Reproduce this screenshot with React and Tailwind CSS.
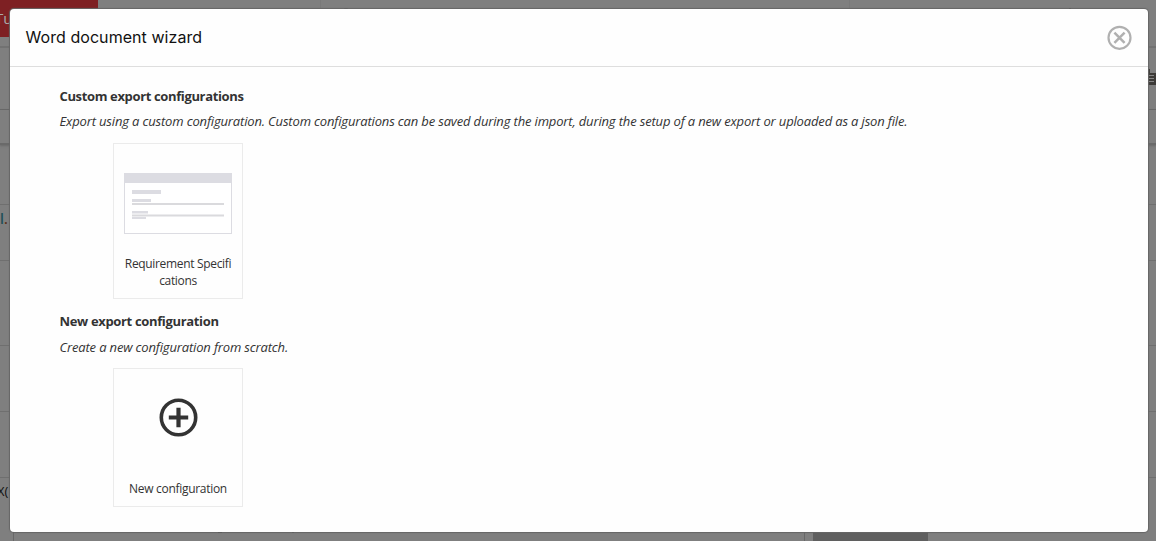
import React from 'react';

/**
 * Backdrop — the dimmed editor page that stays visible around the dialog.
 */
function Backdrop() {
  return (
    <div className="flex h-[541px] w-full flex-col overflow-hidden bg-[#7f7f7f] font-['Open_Sans',sans-serif]">
      {/* Tab strip */}
      <div className="flex h-12 flex-none items-start border-b-2 border-[#727272]">
        <div className="flex h-[37px] w-[98px] items-center bg-[#7e2023] text-[15px] text-[#aaa]">
          <span className="-ml-[5px]">Tu</span>
        </div>
        <div className="ml-[222px] h-full w-[530px] border-x border-[#797979] pt-2 pl-[22px]">
          <div className="h-1 w-1.5 rounded-t bg-[#333]" />
        </div>
        <div className="mt-2 ml-[219px] h-1 w-0.5 bg-[#222]" />
      </div>

      {/* Toolbar */}
      <div className="flex h-[62px] flex-none items-start justify-end border-b border-[#686868] pt-[20px]">
        <svg width="9" height="18" viewBox="0 0 9 18" fill="none">
          <path d="M0 1h3v4h6v12H0z" fill="#3d3b38" />
          <path d="M2 7.5h5M2 10.5h5M2 13.5h5" stroke="#858585" />
        </svg>
      </div>
      <div className="h-[35px] flex-none border-b-2 border-[#6a6a6a] shadow-[0_1px_2px_#6a6a6a]" />

      {/* Table rows */}
      <div className="h-[60px] flex-none border-b border-[#6f6f6f]" />
      <div className="h-14 flex-none overflow-hidden border-b border-[#6f6f6f] text-[14px] leading-5">
        <div className="pt-1 font-semibold">
          <span className="text-[#1d4f57]">l</span>
          <span className="text-[#5b3018]">.</span>
        </div>
      </div>
      <div className="h-[85px] flex-none border-b border-[#6f6f6f]" />
      <div className="h-[66px] flex-none border-b border-[#6f6f6f]" />
      <div className="h-[66px] flex-none border-b border-[#6f6f6f]" />
      <div className="h-[54px] flex-none text-[13px] leading-5 text-[#111]">
        <div className="-ml-[3px] pt-[3px]">X(</div>
      </div>
      <div className="flex h-[9px] flex-none">
        <div className="w-[13px]" />
        <div className="flex w-[792px] border-x border-[#686868]">
          <div className="ml-[204px] h-px w-1 bg-black" />
          <div className="ml-[70px] h-px w-0.5 bg-[#222]" />
        </div>
        <div className="ml-2 w-[115px] bg-[#5f5f5f]" />
      </div>
    </div>
  );
}

function CloseIcon() {
  return (
    <svg width="26" height="26" viewBox="0 0 26 26" fill="none" stroke="#b0b0b0">
      <circle cx="13.5" cy="13.8" r="11" strokeWidth="2.2" />
      <path d="M8.4 8.7l10.2 10.2M18.6 8.7l-10.2 10.2" strokeWidth="2.5" />
    </svg>
  );
}

function TemplateThumbnail() {
  return (
    <svg width="108" height="61" viewBox="0 0 108 61">
      <rect x="0.5" y="0.5" width="107" height="60" fill="#fff" stroke="#dcdce2" />
      <path d="M0 0h108v10H0z" fill="#dcdce2" />
      <path d="M8 17h29v4H8zM8 26h19v3H8zM8 38h16v2.5H8zM8 44h14v2H8z" fill="#dcdce2" />
      <path d="M8 30h92v2H8zM8 41.5h92v2H8z" fill="#dadadd" />
    </svg>
  );
}

function PlusIcon() {
  return (
    <svg width="40" height="40" viewBox="0 0 40 40" fill="none" stroke="#333">
      <circle cx="20.5" cy="20.5" r="17.2" strokeWidth="3.6" />
      <path d="M20.5 10.8v19.4M10.8 20.5h19.4" strokeWidth="4.2" />
    </svg>
  );
}

export default function App() {
  return (
    <div className="relative h-[541px] w-[1156px] overflow-hidden">
      <Backdrop />

      {/* Dialog */}
      <div className="absolute top-[9px] left-[10px] flex h-[523px] w-[1138px] flex-col rounded bg-[#fefefe] font-['Open_Sans',sans-serif] text-[#333] shadow-[0_0_1px_1px_#666]">
        <header className="flex h-[58px] flex-none items-center justify-between border-b border-[#dedede] pr-4 pb-px pl-[15.5px]">
          <h1 className="pb-px font-['Inter',sans-serif] text-base tracking-[0.06px] text-[#111]">Word document wizard</h1>
          <button aria-label="Close">
            <CloseIcon />
          </button>
        </header>

        <main className="pt-[18px] pl-[49.5px]">
          <h2 className="h-[25px] text-[13px] leading-[22px] font-bold tracking-[-0.36px]">
            <span>Custom export configurations</span>
          </h2>
          <p className="h-[33px] text-[13px] leading-[22px] tracking-[-0.156px] whitespace-nowrap italic">
            <span>
              Export using a custom configuration. Custom configurations can be saved during the import, during the setup of a new export or uploaded as a json file.
            </span>
          </p>
          <div className="ml-[53.5px] flex h-[156px] w-[130px] flex-col items-center border border-[#ebebeb] pt-[29px]">
            <TemplateThumbnail />
            <div className="mt-[21px] text-center text-[12px] leading-[17px] tracking-[-0.33px]">
              <div>Requirement Specifi</div>
              <div>cations</div>
            </div>
          </div>

          <h2 className="mt-[11px] h-[26px] text-[13px] leading-[22px] font-bold tracking-[-0.34px]">
            <span>New export configuration</span>
          </h2>
          <p className="h-[32px] text-[13px] leading-[22px] tracking-[-0.156px] italic">
            <span>Create a new configuration from scratch.</span>
          </p>
          <div className="ml-[53.5px] flex h-[139px] w-[130px] flex-col items-center border border-[#ebebeb] pt-[28px]">
            <PlusIcon />
            <div className="mt-[43px] text-[12px] leading-[17px] tracking-[-0.3px]">New configuration</div>
          </div>
        </main>
      </div>
    </div>
  );
}
